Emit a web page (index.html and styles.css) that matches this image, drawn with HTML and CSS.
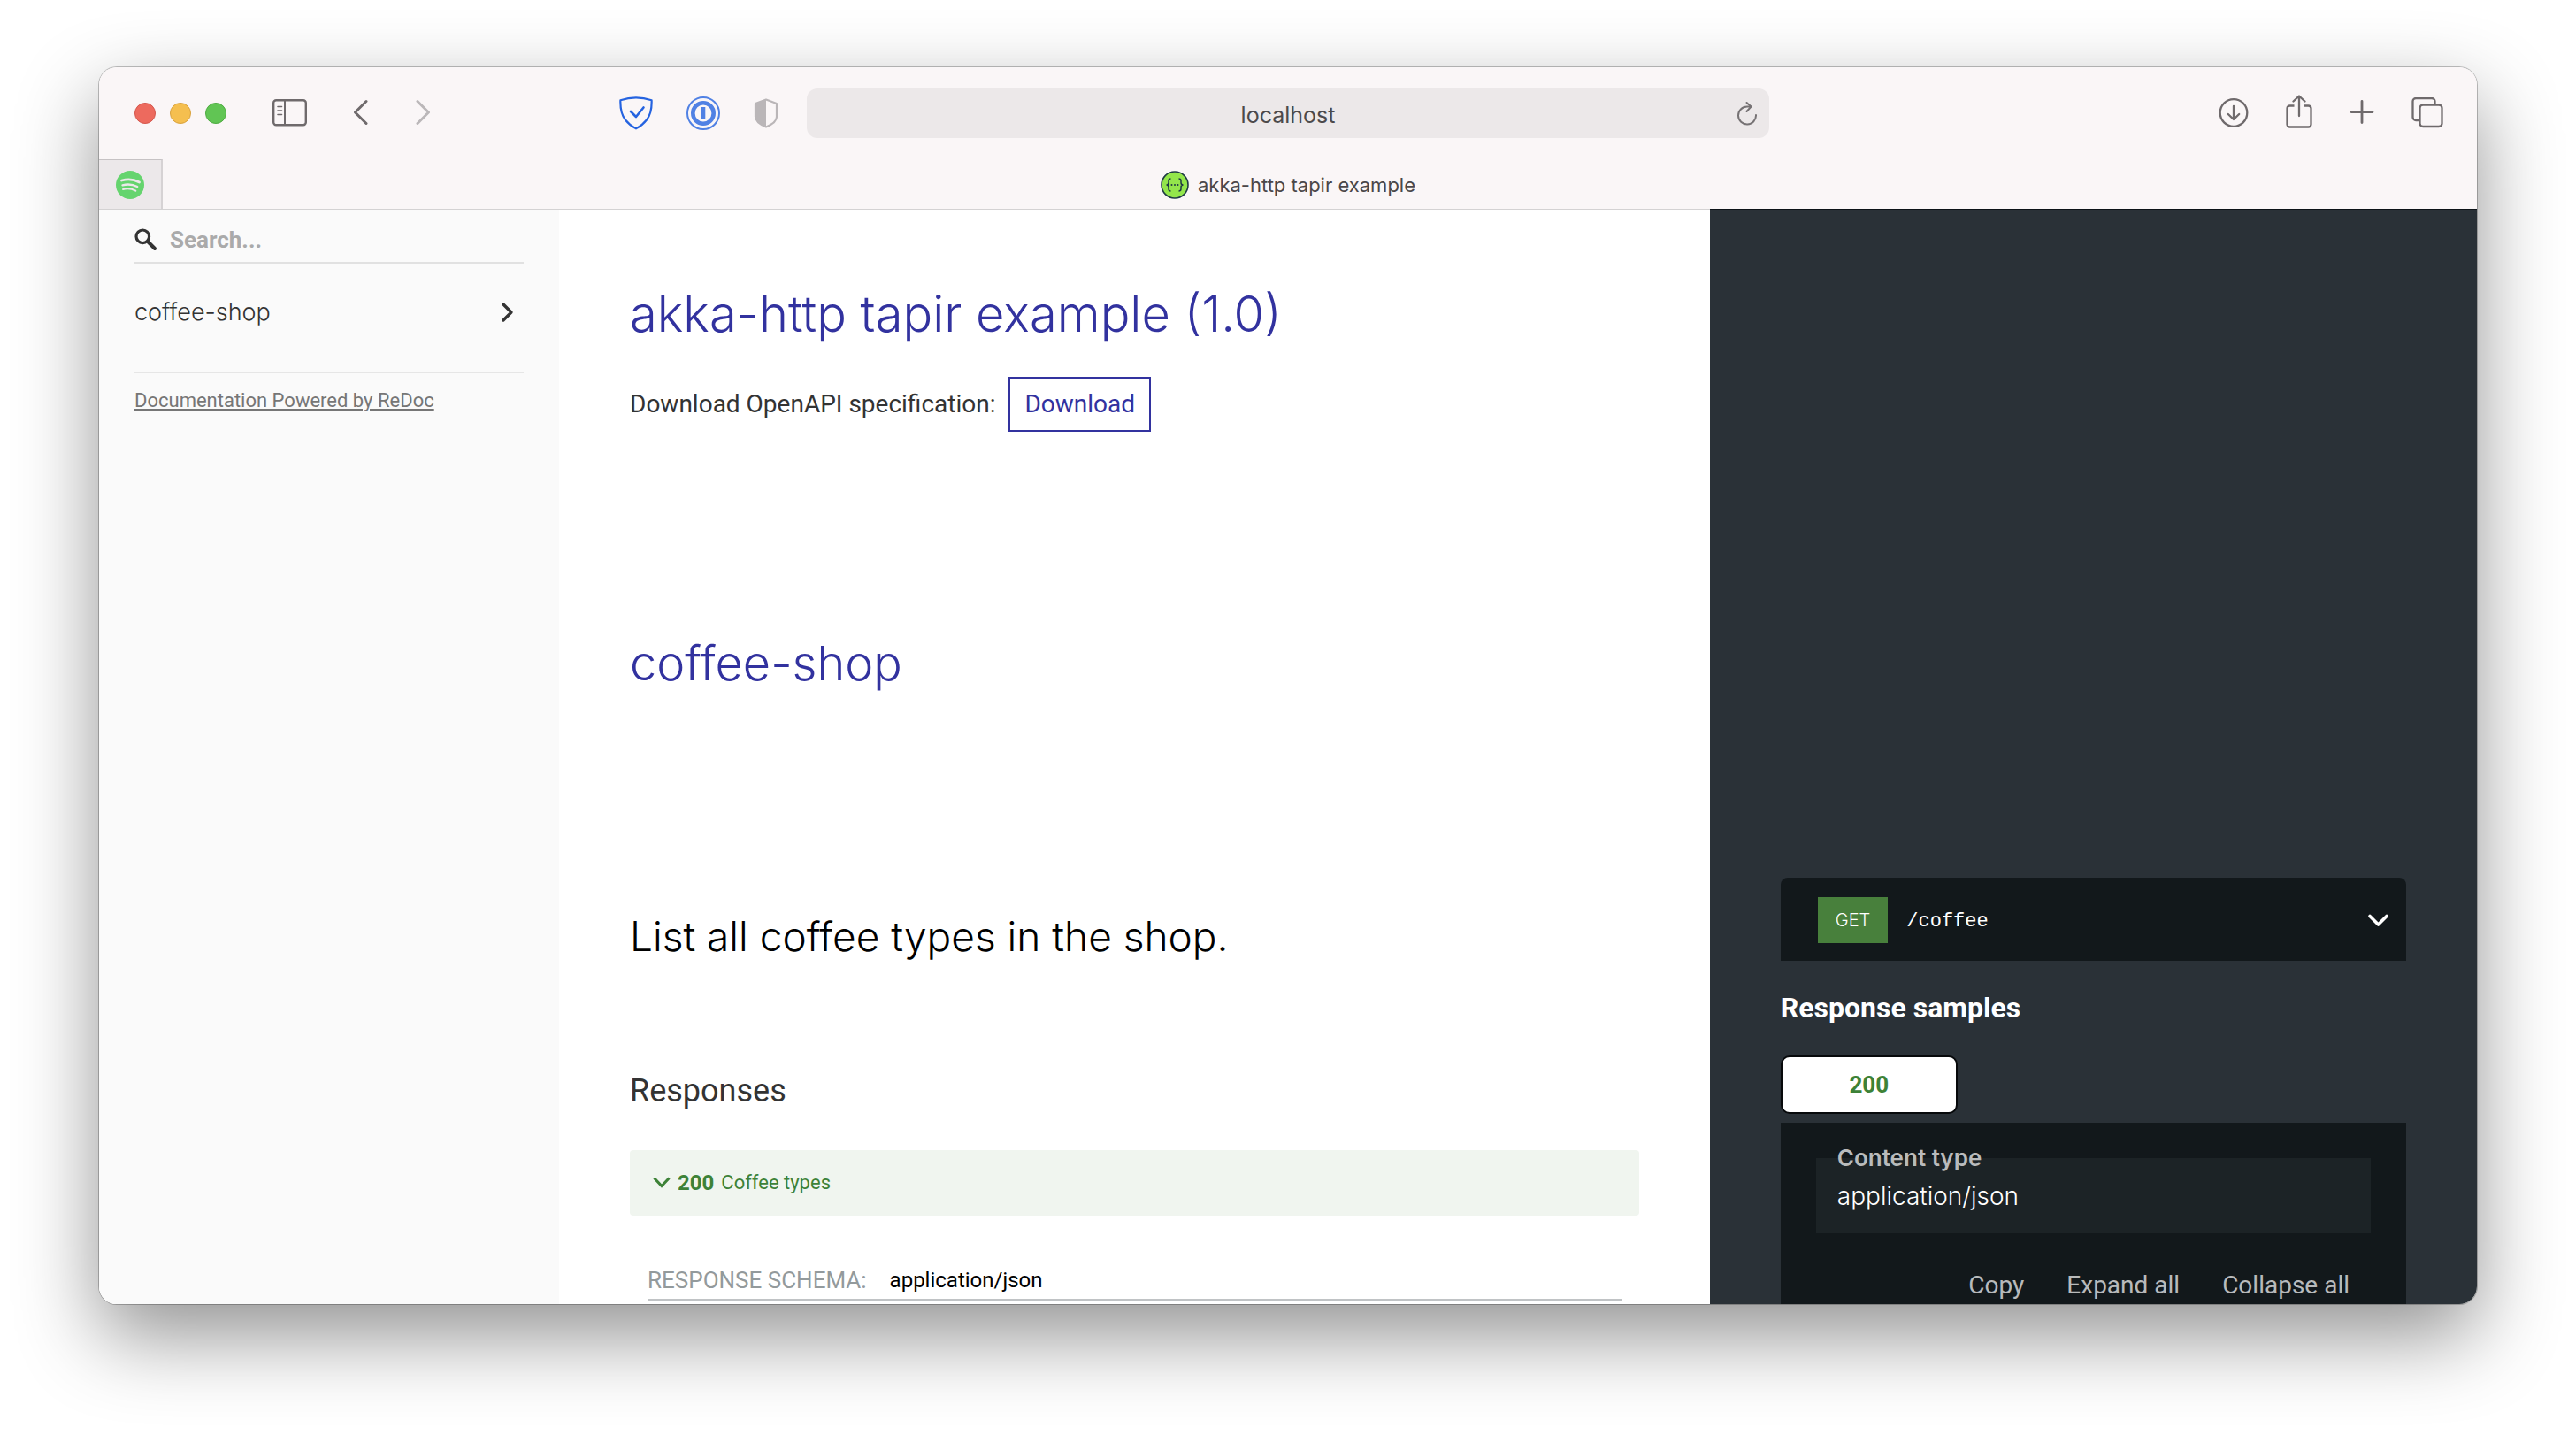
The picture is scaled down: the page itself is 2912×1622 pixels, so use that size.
FILE: index.html
```html
<!DOCTYPE html>
<html lang="en">
<head>
<meta charset="utf-8">
<title>akka-http tapir example</title>
<link rel="stylesheet" href="styles.css">
</head>
<body>
<div class="window">
  <header class="chrome">
    <div class="toolbar">
      <div class="tools-left">
        <div class="lights">
          <button class="light light-red" aria-label="Close"></button>
          <button class="light light-yellow" aria-label="Minimize"></button>
          <button class="light light-green" aria-label="Zoom"></button>
        </div>
        <button class="tool" aria-label="Sidebar">
          <svg width="40" height="32" viewBox="0 0 40 32" fill="none" stroke="#6f6a6c"><rect x="1.2" y="1.2" width="36.6" height="28" rx="3" stroke-width="2.4"/><path d="M14 1v28" stroke-width="2"/><path d="M6 8.500h4.500M6 13h4.500M6 17.500h4.500" stroke-width="1.600" stroke-linecap="round"/></svg>
        </button>
        <div class="history">
          <button class="tool" aria-label="Back">
            <svg width="18" height="32" viewBox="0 0 18 32" fill="none" stroke="#6f6a6c" stroke-width="3" stroke-linecap="round" stroke-linejoin="round"><path d="M14 2.500L1.500 15 14 27.500"/></svg>
          </button>
          <button class="tool" aria-label="Forward">
            <svg width="18" height="32" viewBox="0 0 18 32" fill="none" stroke="#bbb7b9" stroke-width="3" stroke-linecap="round" stroke-linejoin="round"><path d="M2 2.500L14.500 15 2 27.500"/></svg>
          </button>
        </div>
        <div class="extensions">
          <button class="tool" aria-label="Ad blocker">
            <svg width="38" height="38" viewBox="0 0 38 38" fill="none" stroke="#2563e0" stroke-linecap="round" stroke-linejoin="round"><path d="M1.400 4.200Q19-1.400 36.600 4.200C37 15 35.500 21 31 26.500 27.500 31 23.500 34 19 36.400 14.500 34 10.500 31 7 26.500 2.500 21 1 15 1.400 4.200Z" stroke-width="2.200"/><path d="M13 17l6 6 8.500-10.500" stroke-width="2.600"/></svg>
          </button>
          <button class="tool" aria-label="Passwords">
            <svg width="38" height="38" viewBox="0 0 38 38" fill="none" stroke="#5081e4"><circle cx="19" cy="19" r="18" stroke-width="2"/><circle cx="19" cy="19" r="11.700" stroke-width="4.600"/><path d="M19 12v14" stroke-width="4.600"/></svg>
          </button>
          <button class="tool" aria-label="Privacy report">
            <svg width="28" height="34" viewBox="0 0 28 34"><path d="M14 1.500L26 6v15c0 5-6 9-12 11.500C8 30 2 26 2 21V6Z" fill="none" stroke="#bab6b8" stroke-width="2.200" stroke-linejoin="round"/><path d="M14 1L1.500 6v15c0 5 6 9 12.500 12Z" fill="#bab6b8"/></svg>
          </button>
        </div>
      </div>
      <div class="address">
        <input class="address-input" type="text" value="localhost" aria-label="Address">
        <button class="tool reload" aria-label="Reload">
          <svg width="24" height="28" viewBox="0 0 24 28" fill="none" stroke="#767274" stroke-width="2" stroke-linecap="round" stroke-linejoin="round"><path d="M21 16A10 10 0 1 1 11 6.500H15"/><path d="M10.500 2L15.500 6.500 10.500 12"/></svg>
        </button>
      </div>
      <div class="tools-right">
        <button class="tool" aria-label="Downloads">
          <svg width="34" height="34" viewBox="0 0 34 34" fill="none" stroke="#6f6a6c" stroke-width="2.300" stroke-linecap="round" stroke-linejoin="round"><circle cx="17" cy="16.500" r="15.300"/><path d="M17 9v15M10.800 18L17 24l6.200-6"/></svg>
        </button>
        <button class="tool" aria-label="Share">
          <svg width="30" height="42" viewBox="0 0 30 42" fill="none" stroke="#6f6a6c" stroke-width="2.300" stroke-linecap="round" stroke-linejoin="round"><path d="M9.500 12.500H4.500a3 3 0 0 0-3 3v18a3 3 0 0 0 3 3h21a3 3 0 0 0 3-3v-18a3 3 0 0 0-3-3h-5" stroke-linecap="butt"/><path d="M15 24V2M8.500 7.500L15 1.500l6.500 6"/></svg>
        </button>
        <button class="tool" aria-label="New tab">
          <svg width="28" height="30" viewBox="0 0 28 30" fill="none" stroke="#6f6a6c" stroke-width="2.800" stroke-linecap="round"><path d="M14 1.500v24M2 13.500h24"/></svg>
        </button>
        <button class="tool" aria-label="Tab overview">
          <svg width="36" height="36" viewBox="0 0 36 36" fill="none" stroke="#6f6a6c" stroke-width="2.300"><path d="M8.500 26H5a3.500 3.500 0 0 1-3.500-3.500V4.500A3.500 3.500 0 0 1 5 1h18a3.500 3.500 0 0 1 3.500 3.500v3.500"/><rect x="9.500" y="8.500" width="25" height="24.500" rx="3.500"/></svg>
        </button>
      </div>
    </div>
    <div class="tabs">
      <a class="pinned" href="#" aria-label="Spotify">
        <svg width="32" height="32" viewBox="0 0 32 32" fill="none" stroke="#ece8ea" stroke-linecap="round"><circle cx="16" cy="16" r="16" fill="#65d46e" stroke="none"/><path d="M6.500 11c7-2 14-1.300 20 2" stroke-width="2.800"/><path d="M7.500 16.300c6-1.600 11.500-1 16.700 1.700" stroke-width="2.400"/><path d="M8 21c5-1.200 9.800-.7 14.300 1.700" stroke-width="2"/></svg>
      </a>
      <a class="tab" href="#">
        <svg width="32" height="32" viewBox="0 0 32 32"><circle cx="16" cy="16" r="15" fill="#93e64b" stroke="#1f3b45" stroke-width="1.600"/><path d="M11.500 9c-2 0-2.500.7-2.500 2.500v2c0 1.700-.7 2.500-2.500 2.500 1.800 0 2.500.8 2.500 2.500v2c0 1.800.5 2.500 2.500 2.500M20.500 9c2 0 2.500.7 2.500 2.500v2c0 1.700.7 2.500 2.500 2.500-1.800 0-2.500.8-2.500 2.500v2c0 1.800-.5 2.500-2.500 2.500" fill="none" stroke="#1f3b45" stroke-width="1.500"/><g fill="#1f3b45"><circle cx="12.500" cy="16" r="1"/><circle cx="16" cy="16" r="1"/><circle cx="19.500" cy="16" r="1"/></g></svg>
        <span>akka-http tapir example</span>
      </a>
    </div>
  </header>

  <div class="page">
    <nav class="sidebar">
      <label class="search">
        <svg width="26" height="26" viewBox="0 0 26 26" fill="none" stroke="#333" stroke-linecap="round"><circle cx="9.300" cy="9.300" r="7.300" stroke-width="3.200"/><path d="M15 15l8 8" stroke-width="4"/></svg>
        <input class="search-input" type="text" placeholder="Search..." aria-label="Search">
      </label>
      <a class="menu-item" href="#coffee-shop">
        <span>coffee-shop</span>
        <svg width="16" height="24" viewBox="0 0 16 24" fill="none" stroke="#333" stroke-width="3.400" stroke-linecap="round" stroke-linejoin="round"><path d="M3 3l9 9-9 9"/></svg>
      </a>
      <div class="credit"><a href="#redoc">Documentation Powered by ReDoc</a></div>
    </nav>

    <main class="content">
      <h1 class="title">akka-http tapir example (1.0)</h1>
      <p class="download">Download OpenAPI specification: <a class="download-link" href="#download">Download</a></p>
      <h2 class="group" id="coffee-shop">coffee-shop</h2>
      <h2 class="operation">List all coffee types in the shop.</h2>
      <h3 class="responses">Responses</h3>
      <button class="response">
        <svg width="20" height="16" viewBox="0 0 20 16" fill="none" stroke="#3d8237" stroke-width="3"><path d="M1.500 2.500l8.500 9 8.500-9"/></svg>
        <strong>200</strong> <span>Coffee types</span>
      </button>
      <div class="schema">
        <span class="schema-label">RESPONSE SCHEMA:</span>
        <span class="schema-type">application/json</span>
      </div>
    </main>

    <aside class="samples">
      <button class="endpoint">
        <span class="verb">GET</span>
        <span class="path">/coffee</span>
        <svg width="26" height="18" viewBox="0 0 26 18" fill="none" stroke="#fff" stroke-width="3.600" stroke-linecap="round" stroke-linejoin="round"><path d="M3 4.500l9.500 9.500L22 4.500"/></svg>
      </button>
      <h3 class="samples-title">Response samples</h3>
      <button class="status">200</button>
      <div class="panel">
        <div class="media">
          <label class="media-label" for="media">Content type</label>
          <select class="media-select" id="media"><option>application/json</option></select>
        </div>
        <div class="actions">
          <button class="action">Copy</button>
          <button class="action">Expand all</button>
          <button class="action">Collapse all</button>
        </div>
      </div>
    </aside>
  </div>
</div>
</body>
</html>
```
FILE: styles.css
```css
* { box-sizing: border-box; }

body {
  margin: 0;
  height: 100vh;
  padding: 76px 112px 148px;
  background: #fff;
  color: #333;
  font: 28px/42px Roboto, "Liberation Sans", sans-serif;
  overflow: hidden;
}

h1, h2, h3, p { margin: 0; font-weight: 400; }
a { color: inherit; text-decoration: none; }
button, input, select { margin: 0; padding: 0; border: 0; background: none; color: inherit; font: inherit; }
svg { display: block; flex: none; }

.window {
  height: 100%;
  display: flex;
  flex-direction: column;
  border-radius: 20px;
  overflow: hidden;
  box-shadow: 0 0 0 1px rgba(0, 0, 0, .24), 0 36px 92px rgba(0, 0, 0, .43);
}

/* Browser chrome */
.chrome { flex: none; background: #faf6f7; font-family: Inter, sans-serif; }
.toolbar {
  display: grid;
  grid-template-columns: minmax(0, 1fr) minmax(0, 1088px) minmax(0, 1fr);
  align-items: center;
  height: 104px;
}
.tools-left { display: flex; align-items: center; padding: 0 32px 0 40px; gap: 52px; }
.lights { display: flex; gap: 16px; }
.light { width: 24px; height: 24px; border: 1px solid; border-radius: 50%; }
.light-red { background: #ed6a5e; border-color: #d5574d; }
.light-yellow { background: #f5bf4f; border-color: #d9a23e; }
.light-green { background: #61c554; border-color: #4fab42; }
.history { display: flex; gap: 52px; }
.extensions { display: flex; align-items: center; gap: 38px; margin-left: auto; }
.address { position: relative; }
.address-input {
  display: block;
  width: 100%;
  height: 56px;
  padding-top: 3px;
  border-radius: 12px;
  background: #ece8e9;
  color: #4d4a4b;
  font-size: 25px;
  text-align: center;
}
.reload { position: absolute; right: 12px; top: 14px; }
.tools-right { display: flex; align-items: center; justify-content: flex-end; gap: 42px; padding-right: 38px; }

.tabs { display: grid; grid-template-columns: 72px minmax(0, 1fr) 72px; height: 56px; }
.pinned {
  display: flex;
  align-items: center;
  justify-content: center;
  background: #ece8ea;
  border-top: 1px solid #c6c2c4;
  border-right: 2px solid #d6d2d4;
}
.tab { display: flex; align-items: center; justify-content: center; gap: 10px; padding-top: 2px; color: #4b4749; font-size: 22px; }

/* Documentation page */
.page {
  flex: 1;
  min-height: 0;
  display: grid;
  grid-template-columns: 520px minmax(0, 3fr) minmax(0, 2fr);
  overflow: hidden;
  background: #fff;
}

.sidebar { padding: 9px 40px 0; background: #fafafa; border-top: 1px solid #d4d2d3; }
.search { display: flex; align-items: center; gap: 14px; height: 52px; border-bottom: 2px solid #e1e1e1; }
.search-input { flex: 1; min-width: 0; font-size: 26px; font-weight: 700; outline: 0; }
.search-input::placeholder { color: #aaa; opacity: 1; }
.menu-item {
  display: flex;
  align-items: center;
  justify-content: space-between;
  height: 58px;
  margin: 26px 0 38px;
  padding-right: 10px;
  font: 350 27px/40px Inter, sans-serif;
}
.credit { padding-top: 15px; border-top: 2px solid #e6e6e6; color: #767676; font-size: 22px; line-height: 32px; }
.credit a { text-decoration: underline; }

.content { padding: 78px 80px 0; border-top: 1px solid #d4d2d3; }
.title, .group { color: #32329f; font: 350 56px/80px Inter, sans-serif; }
.download { display: flex; align-items: center; gap: 15px; margin-top: 31px; }
.download-link { padding: 8px 16px; border: 2px solid #32329f; color: #32329f; }
.group { margin-top: 222px; font-size: 54px; }
.operation { margin-top: 238px; color: #000; font: 350 46px/60px Inter, sans-serif; }
.responses { margin-top: 123px; font-size: 36px; line-height: 44px; }
.response {
  display: flex;
  align-items: center;
  gap: 8px;
  width: 100%;
  height: 74px;
  margin-top: 45px;
  padding: 0 26px;
  border-radius: 4px;
  background: #f0f5ef;
  color: #3d8237;
  font-size: 22px;
}
.response strong { font-size: 24px; }
.schema {
  display: flex;
  gap: 26px;
  margin: 55px 20px 0;
  padding-bottom: 3px;
  border-bottom: 2px solid #c0c3c5;
  line-height: 36px;
}
.schema-label { color: #939a9c; font-size: 26px; }
.schema-type { color: #000; font-size: 24px; }

.samples { padding: 755px 80px 0; background: #2a3137; border-top: 1px solid #0c1217; color: #fff; }
.endpoint {
  display: flex;
  align-items: center;
  width: 100%;
  height: 94px;
  padding: 2px 18px 0 42px;
  border-radius: 8px 8px 0 0;
  background: #12181b;
}
.endpoint svg { margin-left: auto; }
.verb { padding: 5px 20px; background: #48803c; font: 350 20px/42px Inter, sans-serif; }
.path { margin-left: 21px; padding-top: 4px; font: 22px/42px "Liberation Mono", monospace; }
.samples-title { margin-top: 33px; font-size: 32px; font-weight: 700; line-height: 40px; }
.status {
  display: block;
  width: 200px;
  height: 66px;
  margin: 34px 0 10px;
  border: 2px solid #07090b;
  border-radius: 10px;
  background: #fff;
  color: #3d8237;
  font-size: 26px;
  font-weight: 700;
}
.panel { padding: 40px; background: #12181b; }
.media { position: relative; background: #1c2326; font-family: Inter, sans-serif; }
.media-label {
  position: absolute;
  left: 24px;
  top: -16px;
  color: #b9bbbc;
  font-size: 26px;
  font-weight: 600;
  line-height: 32px;
}
.media-select {
  display: block;
  width: 100%;
  height: 85px;
  padding: 0 24px;
  appearance: none;
  color: #fff;
  font-size: 28px;
  font-weight: 350;
}
.actions { display: flex; justify-content: flex-end; gap: 48px; margin-top: 38px; padding-right: 24px; }
.action { color: #b8babb; }
```
